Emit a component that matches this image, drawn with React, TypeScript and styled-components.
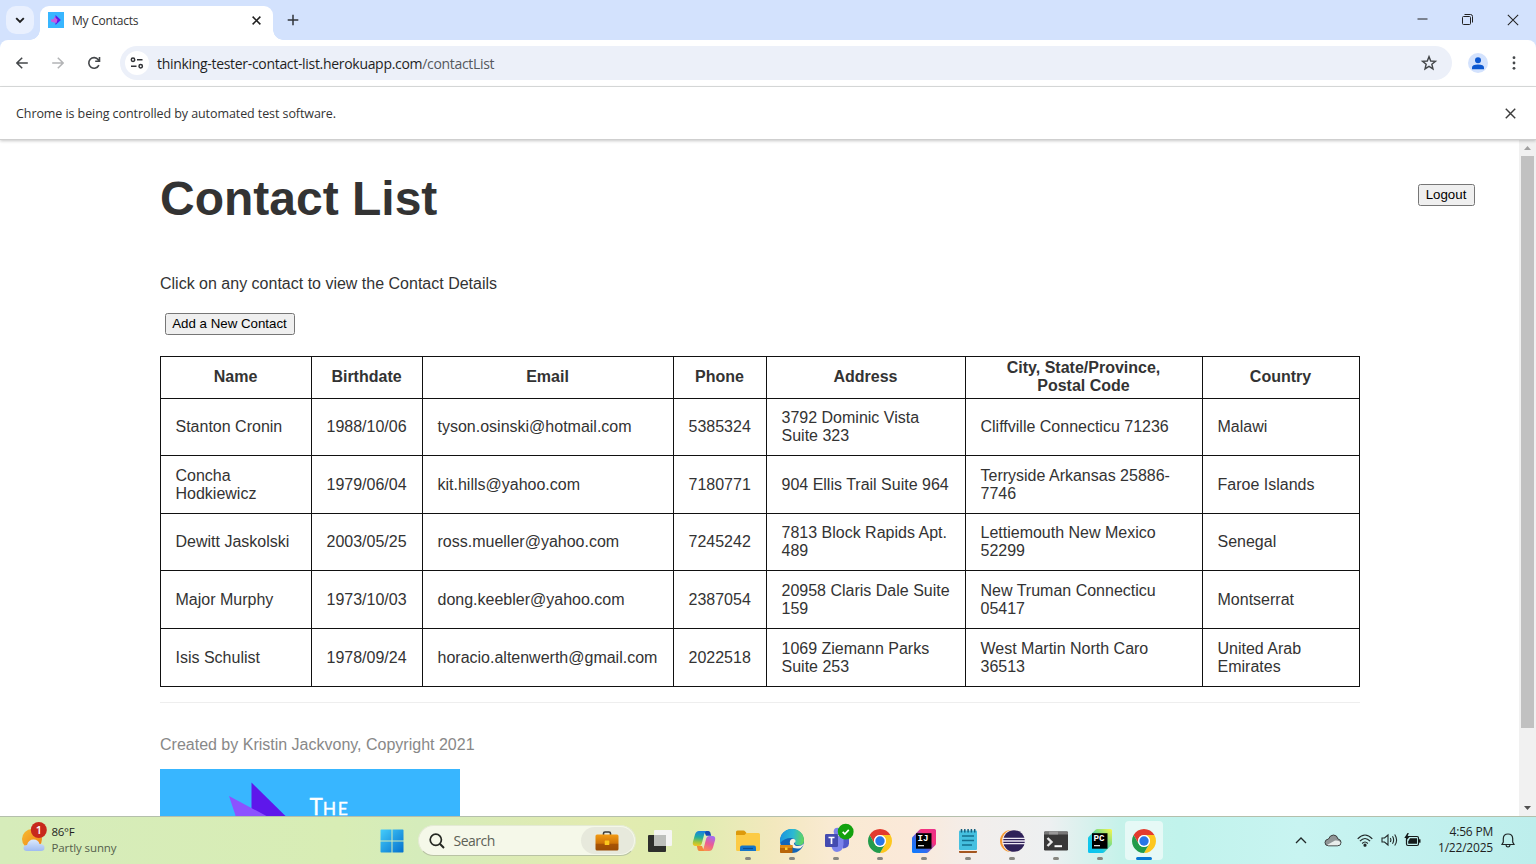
import React from 'react';
import styled, { createGlobalStyle } from 'styled-components';

const Global = createGlobalStyle`
  * { box-sizing: border-box; }
  body { margin: 0; overflow: hidden; background: #fff; }
`;

const ui = `'Open Sans', 'Noto Sans', sans-serif`;
const arial = `'Liberation Sans', Arial, sans-serif`;

const Screen = styled.div`
  width: 1536px;
  height: 864px;
  display: flex;
  flex-direction: column;
  overflow: hidden;
  font-family: ${ui};
`;

const Label = styled.span<{ $size: number; $color?: string; $track?: number }>`
  font-size: ${p => p.$size}px;
  color: ${p => p.$color ?? '#1f1f1f'};
  letter-spacing: ${p => p.$track ?? 0}px;
  white-space: nowrap;
`;

/* ---------- browser chrome ---------- */

const TabStrip = styled.header`
  flex: none;
  height: 40px;
  display: flex;
  background: #d3e2fd;
`;

const TabSearch = styled.div`
  width: 28px;
  height: 28px;
  margin: 6px 0 0 6px;
  border-radius: 10px;
  background: #e9f0fe;
  display: grid;
  place-items: center;
`;

const Tab = styled.div`
  position: relative;
  width: 233px;
  height: 34px;
  margin: 6px 0 0 6px;
  padding: 0 12px 6px 8px;
  display: flex;
  align-items: center;
  background: #fff;
  border-radius: 9px 9px 0 0;
  &::before, &::after {
    content: '';
    position: absolute;
    bottom: 0;
    width: 10px;
    height: 10px;
  }
  &::before { left: -10px; background: radial-gradient(circle at 0 0, transparent 9.5px, #fff 10px); }
  &::after { right: -10px; background: radial-gradient(circle at 100% 0, transparent 9.5px, #fff 10px); }
`;

const TabTitle = styled.div`
  flex: 1;
  padding-left: 8px;
  line-height: 16px;
`;

const NewTab = styled.div`
  width: 40px;
  height: 40px;
  display: grid;
  place-items: center;
`;

const WindowButtons = styled.div`
  margin-left: auto;
  display: flex;
  height: 39px;
`;

const WindowButton = styled.div`
  width: 45.5px;
  display: grid;
  place-items: center;
`;

const ToolbarBack = styled.div`
  flex: none;
  background: #d3e2fd;
`;

const Toolbar = styled.nav`
  height: 47px;
  border-bottom: 1px solid #dcdede;
  border-radius: 8px 8px 0 0;
  background: #fff;
  display: flex;
  align-items: center;
  padding-left: 4px;
`;

const NavButton = styled.div`
  width: 36px;
  height: 46px;
  display: grid;
  place-items: center;
`;

const Omnibox = styled.div`
  flex: none;
  width: 1332px;
  height: 34px;
  margin-left: 8px;
  padding: 0 14px 0 5px;
  border-radius: 17px;
  background: #ecf0f9;
  display: flex;
  align-items: center;
`;

const SiteInfo = styled.div`
  width: 24px;
  height: 24px;
  border-radius: 50%;
  background: #fff;
  display: grid;
  place-items: center;
`;

const Url = styled.div`
  flex: 1;
  padding-left: 8px;
  line-height: 20px;
`;

const Avatar = styled.div`
  flex: none;
  width: 20px;
  height: 20px;
  margin-left: 16px;
  border-radius: 50%;
  background: #d3e2fd;
  display: grid;
  place-items: center;
`;

const MoreButton = styled.div`
  width: 48px;
  padding-left: 4px;
  display: grid;
  place-items: center;
`;

const InfoBar = styled.div`
  position: relative;
  z-index: 1;
  flex: none;
  height: 53px;
  padding: 0 20.5px 0 16px;
  display: flex;
  align-items: center;
  justify-content: space-between;
  background: #fff;
  border-bottom: 1px solid #cfcfcf;
  box-shadow: 0 1px 3px rgba(0, 0, 0, 0.22);
`;

/* ---------- web page ---------- */

const Viewport = styled.div`
  flex: 1;
  min-height: 0;
  display: flex;
`;

const Page = styled.main`
  flex: 1;
  padding: 0 44.5px 0 160px;
  overflow: hidden;
  font-family: ${arial};
  font-size: 16px;
  color: #333;
`;

const PageHeader = styled.div`
  display: flex;
  justify-content: space-between;
  align-items: flex-start;
  height: 134px;
`;

const Title = styled.h1`
  margin: 31px 0 0;
  font-size: 48px;
  line-height: 55px;
  font-weight: 700;
`;

const PlainButton = styled.button`
  height: 22px;
  padding: 0 6px 1px;
  border: 1px solid #767676;
  border-radius: 2.5px;
  background: #efefef;
  color: #000;
  font: 13.3px/18px ${arial};
  white-space: nowrap;
`;

const Logout = styled(PlainButton)`
  width: 57px;
  margin-top: 44px;
`;

const AddContact = styled(PlainButton)`
  display: block;
  width: 130px;
  padding: 0 5px;
  margin: 20px 0 21px 4.5px;
`;

const Hint = styled.p`
  margin: 0;
  line-height: 19px;
`;

const ContactTable = styled.table`
  width: 1200px;
  table-layout: fixed;
  border-collapse: collapse;
  line-height: 18px;
`;

const Col = styled.col<{ $w: number }>`
  width: ${p => p.$w}px;
`;

const Row = styled.tr<{ $h: number }>`
  height: ${p => p.$h}px;
`;

const HeadCell = styled.th`
  border: 1px solid #111;
  padding: 0 1px 1px 0;
  white-space: nowrap;
`;

const Cell = styled.td<{ $drop: boolean }>`
  border: 1px solid #111;
  padding: 0 0 ${p => (p.$drop ? 0 : 1)}px 14.5px;
  white-space: nowrap;
`;

const Divider = styled.hr`
  width: 1200px;
  margin: 15px 0 32px;
  border: 0;
  border-top: 1px solid #eee;
`;

const Credit = styled.p`
  margin: 0 0 15px;
  line-height: 19px;
  color: #888;
`;

const Banner = styled.svg`
  display: block;
`;

const Scrollbar = styled.aside`
  width: 17px;
  padding-left: 2px;
  background: #f1f1f1;
  display: flex;
  flex-direction: column;
  justify-content: space-between;
`;

const Arrow = styled.div`
  height: 16px;
  width: 13px;
  display: grid;
  place-items: center;
`;

const Thumb = styled.div`
  width: 13px;
  height: 572px;
  background: #c1c1c1;
  margin-bottom: auto;
`;

/* ---------- taskbar ---------- */

const Taskbar = styled.footer`
  flex: none;
  height: 48px;
  border-top: 1px solid #b4bfac;
  display: flex;
  align-items: center;
  background: linear-gradient(90deg, #d6ecba 0, #d8edb5 340px, #d5ecbb 420px, #e3ebb0 600px, #deedb0 690px,
    #f3e8be 775px, #f9ead2 830px, #fbe9d9 910px, #f2eeec 980px, #edf0f1 1050px, #c6f2ea 1120px, #c1f3ec 1180px, #c8f4f1 1300px, #bdeeec 1536px);
`;

const Weather = styled.div`
  flex: none;
  width: 379.5px;
  height: 47px;
  padding: 0 0 2px 20px;
  display: flex;
  gap: 3.5px;
`;

const Stack = styled.div<{ $end?: boolean }>`
  display: flex;
  flex-direction: column;
  justify-content: center;
  align-items: ${p => (p.$end ? 'flex-end' : 'flex-start')};
  line-height: 16px;
`;

const Clock = styled(Stack)`
  margin-left: 9px;
  padding-bottom: 2px;
`;

const SearchBox = styled.div`
  flex: none;
  width: 218px;
  height: 31px;
  margin: 0 2.5px 0 14px;
  padding: 0 1px 0 10px;
  border-radius: 16px;
  border: 1px solid #e4ead4;
  border-bottom-color: #b9c3a4;
  background: #f5f8e9;
  display: flex;
  align-items: center;
  gap: 9px;
`;

const SearchChip = styled.div`
  width: 53px;
  height: 27px;
  margin-left: auto;
  border-radius: 14px;
  background: #e7e9dc;
  display: grid;
  place-items: center;
`;

const AppSlot = styled.div<{ $active?: boolean }>`
  position: relative;
  flex: none;
  width: 38px;
  height: 39px;
  margin: 0 3px;
  border-radius: 4px;
  background: ${p => (p.$active ? '#e6f9f6' : 'transparent')};
  display: grid;
  place-items: center;
`;

const Indicator = styled.i<{ $active?: boolean }>`
  position: absolute;
  left: 50%;
  bottom: 0;
  width: ${p => (p.$active ? 16 : 6)}px;
  height: 3px;
  transform: translateX(-50%);
  border-radius: 2px;
  background: ${p => (p.$active ? '#0878d4' : '#888780')};
`;

const Tray = styled.div`
  margin-left: auto;
  padding-right: 13px;
  display: flex;
  align-items: center;
`;

const TrayIcon = styled.div<{ $w: number }>`
  width: ${p => p.$w}px;
  padding-bottom: 1px;
  display: grid;
  place-items: center;
`;

/* ---------- icons ---------- */

const Cross = ({ size, color, w }: { size: number; color: string; w: number }) => (
  <svg width={size} height={size} viewBox="0 0 10 10" fill="none" stroke={color} strokeWidth={w}>
    <path d="M.7.7l8.6 8.6M9.3.7L.7 9.3" />
  </svg>
);

const Chrome = () => (
  <svg width="24" height="24" viewBox="0 0 24 24">
    <path d="M1.610 6A12 12 0 0 1 22.390 6H12A6 6 0 0 0 6.800 15Z" fill="#e33b2e" />
    <path d="M22.390 6A12 12 0 0 1 12 24L17.200 15A6 6 0 0 0 12 6Z" fill="#fdc71e" />
    <path d="M12 24A12 12 0 0 1 1.610 6L6.800 15A6 6 0 0 0 17.200 15Z" fill="#229b4b" />
    <circle cx="12" cy="12" r="6" fill="#fff" />
    <circle cx="12" cy="12" r="4.700" fill="#2876e8" />
  </svg>
);

const Briefcase = () => (
  <svg width="24" height="20" viewBox="0 0 24 20">
    <defs>
      <linearGradient id="bag" x1="0" y1="0" x2="0" y2="1">
        <stop offset="0" stopColor="#f39b13" />
        <stop offset=".55" stopColor="#cf7408" />
        <stop offset=".6" stopColor="#a85405" />
        <stop offset="1" stopColor="#9b4c05" />
      </linearGradient>
    </defs>
    <path d="M8.500 4V2.600Q8.500 1 10 1h4Q15.500 1 15.500 2.600V4" fill="none" stroke="#3a3a38" strokeWidth="1.600" />
    <rect x=".5" y="3.500" width="23" height="16" rx="1.500" fill="url(#bag)" />
    <rect x="9.700" y="9.500" width="4.600" height="4.600" rx=".6" fill="#fcc81d" />
  </svg>
);

const WindowsLogo = () => (
  <svg width="24" height="24" viewBox="0 0 24 24">
    <defs>
      <linearGradient id="win" x1="0" y1="0" x2="1" y2="1">
        <stop offset="0" stopColor="#45cdfb" />
        <stop offset="1" stopColor="#0470cd" />
      </linearGradient>
    </defs>
    <path d="M.5 1.200Q.5.5 1.200.5H11.500V11.500H.5ZM12.500.5H22.800Q23.500.5 23.500 1.200V11.500H12.500ZM.5 12.500H11.500V23.500H1.200Q.5 23.500.5 22.800ZM12.500 12.500H23.500V22.800Q23.500 23.500 22.800 23.500H12.500Z" fill="url(#win)" />
  </svg>
);

const TaskView = () => (
  <svg width="24" height="24" viewBox="0 0 24 24">
    <rect x="0" y="6" width="18" height="17" rx="1" fill="#2e2f2c" />
    <rect x="6" y="1" width="18" height="16" rx="1" fill="#f5f5f3" />
    <rect x="6" y="6" width="12" height="11" fill="#bdbfbb" />
  </svg>
);

const Copilot = () => (
  <svg width="24" height="24" viewBox="0 0 24 24">
    <defs>
      <linearGradient id="cpA" x1="0.400" y1="0" x2="0.300" y2="1">
        <stop offset="0" stopColor="#1b7fe0" />
        <stop offset=".4" stopColor="#1fae9e" />
        <stop offset=".75" stopColor="#a5c63a" />
        <stop offset="1" stopColor="#f4c51f" />
      </linearGradient>
      <linearGradient id="cpB" x1="0.700" y1="0" x2="0.300" y2="1">
        <stop offset="0" stopColor="#a46cf0" />
        <stop offset=".5" stopColor="#ea5c96" />
        <stop offset="1" stopColor="#fb9052" />
      </linearGradient>
    </defs>
    <path d="M12 2H16.500Q17.800 2 18.300 3.500L19.200 6.800H14Z" fill="#1448b5" />
    <path d="M7 2H14.500Q12.800 3 12.200 5.200L9.800 14.500Q9.200 17 7 17H3.500Q.2 17 .9 13L3 5.500Q4 2 7 2Z" fill="url(#cpA)" />
    <path d="M17 22H9.500Q11.200 21 11.800 18.800L14.200 9.500Q14.800 7 17 7H20.500Q23.800 7 23.100 11L21 18.500Q20 22 17 22Z" fill="url(#cpB)" />
    <path d="M12 22H7.500Q6.200 22 5.700 20.500L4.800 17H10Z" fill="#f38a3a" />
  </svg>
);

const Explorer = () => (
  <svg width="24" height="24" viewBox="0 0 24 24">
    <path d="M0 3Q0 1.500 1.500 1.500H7.500Q8.500 1.500 9.200 2.400L10.500 4V8H0Z" fill="#dd9a0c" />
    <path d="M0 6H8.500L10.500 4H22.500Q24 4 24 5.500V20.500Q24 22 22.500 22H1.500Q0 22 0 20.500Z" fill="#fccb45" />
    <path d="M4 22V18.500Q4 16.500 6 16.500H18Q20 16.500 20 18.500V22Z" fill="#1576c9" />
    <path d="M7 19.500H17" stroke="#0c4d92" strokeWidth="1.200" />
  </svg>
);

const Edge = () => (
  <svg width="24" height="24" viewBox="0 0 24 24">
    <defs>
      <linearGradient id="edA" x1="0" y1=".3" x2="1" y2=".4">
        <stop offset="0" stopColor="#1b93df" />
        <stop offset=".55" stopColor="#2cb9d2" />
        <stop offset="1" stopColor="#62d65c" />
      </linearGradient>
    </defs>
    <circle cx="12" cy="12" r="12" fill="#1265b8" />
    <path d="M0 12A12 12 0 0 1 24 11.500Q24 16 19 16.300Q15 16.300 14.800 14Q16.500 10 12 9Q5 8.500 0 14Z" fill="url(#edA)" />
    <path d="M24 14.500Q21 17.500 17 17Q14 16.500 14 14Q16.300 13 15.300 11Q13.500 9 11 10.500Q8.500 13 11 17Q14 20.500 20.500 19.200Q23 17.500 24 14.500Z" fill="#faf0e0" />
    <rect x="0" y="16" width="12.500" height="8" rx=".8" fill="#b86507" />
    <rect x="0" y="16" width="12.500" height="3" rx=".8" fill="#e08a12" />
    <rect x="5" y="18.500" width="2.500" height="2.500" fill="#fccb30" />
  </svg>
);

const TeamsSvg = styled.svg`
  overflow: visible;
`;

const Teams = () => (
  <TeamsSvg width="30" height="30" viewBox="0 0 30 30">
    <circle cx="16.500" cy="5.500" r="3.800" fill="#7b83eb" />
    <path d="M20 10H28V17.500Q27.500 22 22 22.500Z" fill="#5059c9" />
    <path d="M11 10H22.500V18.500Q22 25.500 16 26Q11 25.500 10.500 20Z" fill="#7b83eb" />
    <rect x="4" y="8" width="13" height="13" rx="1.200" fill="#444bb0" />
    <path d="M7.500 11.500H13.500M10.500 11.500V18" stroke="#fff" strokeWidth="1.700" />
    <circle cx="24.700" cy="5.700" r="7.900" fill="#13a10e" />
    <path d="M21.700 5.900L23.800 8L27.800 3.900" fill="none" stroke="#fff" strokeWidth="1.700" />
  </TeamsSvg>
);

const JetBrains = ({ code, stops }: { code: string; stops: string[] }) => (
  <svg width="24" height="24" viewBox="0 0 24 24">
    <defs>
      <linearGradient id={`jb${code}`} x1="0" y1="1" x2="1" y2="0">
        {stops.map((c, i) => (
          <stop key={c} offset={i / (stops.length - 1)} stopColor={c} />
        ))}
      </linearGradient>
    </defs>
    <path d="M0 9.500Q0 8.500.7 7.800L7.500.8Q8.300 0 9.300 0H22.500Q24 0 24 1.500V14.500Q24 15.500 23.300 16.200L16.300 23.200Q15.500 24 14.500 24H1.500Q0 24 0 22.500Z" fill={`url(#jb${code})`} />
    <rect x="4" y="4.200" width="15.500" height="15.500" fill="#000" />
    <text x="5.600" y="12.400" fontFamily="Liberation Mono, monospace" fontWeight="700" fontSize="9.200" fill="#fff">{code}</text>
    <rect x="6" y="16" width="6" height="1.300" fill="#ddd" />
  </svg>
);

const Notepad = () => (
  <svg width="20" height="24" viewBox="0 0 20 24">
    <rect x="1" y="19" width="18" height="5" rx="1" fill="#a4561f" />
    <rect x="1" y="19.500" width="18" height="2.500" fill="#f3eee8" />
    <rect x="1" y="1.500" width="18" height="19.500" rx="1" fill="#45c0e0" />
    <path d="M3.500 0V3.500M6.800 0V3.500M10.100 0V3.500M13.400 0V3.500M16.700 0V3.500" stroke="#14607f" strokeWidth="1.500" />
    <path d="M4 7H16M4 11.500H16M4 16H14" stroke="#14708f" strokeWidth="1.500" />
  </svg>
);

const Eclipse = () => (
  <svg width="25" height="24" viewBox="0 0 25 24">
    <path d="M11 1A11 11 0 0 0 11 23L14 12Z" fill="#f69a33" />
    <circle cx="13.500" cy="12" r="11.200" fill="#fdf3ee" />
    <circle cx="14" cy="12" r="10.800" fill="#2f2259" />
    <path d="M2.500 9.300H25M2.500 12H25M2.500 14.700H25" stroke="#efeaf5" strokeWidth="1.300" />
  </svg>
);

const Terminal = () => (
  <svg width="24" height="20" viewBox="0 0 24 20">
    <rect width="24" height="19" y=".5" rx="1.200" fill="#383838" />
    <path d="M0 1.700Q0 .5 1.200.5H22.800Q24 .5 24 1.700V3.500H0Z" fill="#777" />
    <path d="M5 .5H14V3.500H5Z" fill="#999" />
    <path d="M3.500 7L7.500 11L3.500 15" fill="none" stroke="#e8e8e8" strokeWidth="2.400" />
    <path d="M10.500 15.200H18" stroke="#fff" strokeWidth="2" />
  </svg>
);

const WeatherIcon = () => (
  <svg width="28" height="34" viewBox="0 0 28 34">
    <defs>
      <linearGradient id="sun" x1="0" y1="0" x2="1" y2="1">
        <stop offset="0" stopColor="#f6bd31" />
        <stop offset="1" stopColor="#f07d14" />
      </linearGradient>
      <linearGradient id="cl" x1="0" y1="0" x2="0" y2="1">
        <stop offset="0" stopColor="#dce9fc" />
        <stop offset="1" stopColor="#9fbbf1" />
      </linearGradient>
    </defs>
    <circle cx="12" cy="22" r="10" fill="url(#sun)" />
    <path d="M7 34Q3.500 34 3.500 31Q3.500 28.200 7 28Q8.500 22.500 13.500 22.500Q18.500 22.500 19.500 27Q24.500 27 24.500 30.700Q24.500 34 21 34Z" fill="url(#cl)" />
    <circle cx="18.800" cy="13" r="8" fill="#c7281c" />
    <text x="18.800" y="17" textAnchor="middle" fontFamily="Open Sans" fontWeight="600" fontSize="11" fill="#fff">1</text>
  </svg>
);

/* ---------- data ---------- */

const columns: [React.ReactNode, number][] = [
  ['Name', 151],
  ['Birthdate', 111],
  ['Email', 251],
  ['Phone', 93],
  ['Address', 199],
  [<>City, State/Province,<br />Postal Code</>, 237],
  ['Country', 157],
];

const rows: { h: number; cells: string[] }[] = [
  { h: 57, cells: ['Stanton Cronin', '1988/10/06', 'tyson.osinski@hotmail.com', '5385324', '3792 Dominic Vista\nSuite 323', 'Cliffville Connecticu 71236', 'Malawi'] },
  { h: 58, cells: ['Concha\nHodkiewicz', '1979/06/04', 'kit.hills@yahoo.com', '7180771', '904 Ellis Trail Suite 964', 'Terryside Arkansas 25886-\n7746', 'Faroe Islands'] },
  { h: 57, cells: ['Dewitt Jaskolski', '2003/05/25', 'ross.mueller@yahoo.com', '7245242', '7813 Block Rapids Apt.\n489', 'Lettiemouth New Mexico\n52299', 'Senegal'] },
  { h: 58, cells: ['Major Murphy', '1973/10/03', 'dong.keebler@yahoo.com', '2387054', '20958 Claris Dale Suite\n159', 'New Truman Connecticu\n05417', 'Montserrat'] },
  { h: 58, cells: ['Isis Schulist', '1978/09/24', 'horacio.altenwerth@gmail.com', '2022518', '1069 Ziemann Parks\nSuite 253', 'West Martin North Caro\n36513', 'United Arab\nEmirates'] },
];

const MultiLine = styled.span`
  white-space: pre;
`;

const apps: { icon: React.ReactNode; running?: boolean; active?: boolean }[] = [
  { icon: <TaskView /> },
  { icon: <Copilot /> },
  { icon: <Explorer />, running: true },
  { icon: <Edge />, running: true },
  { icon: <Teams />, running: true },
  { icon: <Chrome />, running: true },
  { icon: <JetBrains code="IJ" stops={['#0a7cff', '#2f6df0', '#f7317c', '#e8308a']} />, running: true },
  { icon: <Notepad />, running: true },
  { icon: <Eclipse />, running: true },
  { icon: <Terminal />, running: true },
  { icon: <JetBrains code="PC" stops={['#07c3f2', '#14c8e8', '#8be07c', '#fcf84a']} />, running: true },
  { icon: <Chrome />, active: true },
];

export default function App() {
  return (
    <Screen>
      <Global />
      <TabStrip>
        <TabSearch>
          <svg width="10" height="7" viewBox="0 0 10 7" fill="none" stroke="#1f1f1f" strokeWidth="1.900"><path d="M1.200 1.200L5 5L8.800 1.200" /></svg>
        </TabSearch>
        <Tab>
          <svg width="16" height="16" viewBox="0 0 16 16">
            <rect width="16" height="16" fill="#38b6ff" />
            <path d="M7.500 3L12.800 8L7.500 13Z" fill="#5e17eb" />
            <path d="M6 4.500L9.500 7.500L8.500 11L5.800 10.500L3 9.500V7.500L6 7Z" fill="#c65be0" />
          </svg>
          <TabTitle><Label $size={12} $track={-0.22} $color="#333">My Contacts</Label></TabTitle>
          <Cross size={9} color="#1f1f1f" w={1.7} />
        </Tab>
        <NewTab>
          <svg width="12" height="12" viewBox="0 0 12 12" stroke="#30343a" strokeWidth="1.500"><path d="M6 .7V11.300M.7 6H11.300" /></svg>
        </NewTab>
        <WindowButtons>
          <WindowButton><svg width="11" height="11" viewBox="0 0 11 11" stroke="#222" strokeWidth="1"><path d="M.5 5H10.500" /></svg></WindowButton>
          <WindowButton>
            <svg width="11" height="11" viewBox="0 0 11 11" fill="none" stroke="#222" strokeWidth="1">
              <rect x=".5" y="2.500" width="8" height="8" rx="1" /><path d="M2.500.5H8.500Q10.500.5 10.500 2.500V8.500" />
            </svg>
          </WindowButton>
          <WindowButton><Cross size={12} color="#222" w={0.85} /></WindowButton>
        </WindowButtons>
      </TabStrip>
      <ToolbarBack>
        <Toolbar>
          <NavButton>
            <svg width="12" height="12" viewBox="0 0 12 12" fill="none" stroke="#44474a" strokeWidth="1.500"><path d="M11.800 6H1M6.200.7L.9 6L6.200 11.300" /></svg>
          </NavButton>
          <NavButton>
            <svg width="12" height="12" viewBox="0 0 12 12" fill="none" stroke="#b3b4b6" strokeWidth="1.500"><path d="M.2 6H11M5.800.7L11.100 6L5.800 11.300" /></svg>
          </NavButton>
          <NavButton>
            <svg width="14" height="14" viewBox="0 0 14 14" fill="none" stroke="#44474a" strokeWidth="1.600"><path d="M11.900 9.200A5.300 5.300 0 1 1 11.300 3.700L12.300 5M12.500 1V5.300H8.200" /></svg>
          </NavButton>
          <Omnibox>
            <SiteInfo>
              <svg width="14" height="12" viewBox="0 0 14 12" fill="none" stroke="#303236" strokeWidth="1.500">
                <circle cx="3" cy="2.700" r="1.700" /><path d="M7 2.700H12.500M1 9.300H6.500" /><circle cx="10.700" cy="9.300" r="1.700" />
              </svg>
            </SiteInfo>
            <Url>
              <Label $size={14} $track={-0.31}>thinking-tester-contact-list.herokuapp.com</Label>
              <Label $size={14} $track={-0.31} $color="#55585d">/contactList</Label>
            </Url>
            <svg width="18" height="18" viewBox="0 0 24 24" fill="none" stroke="#44474a" strokeWidth="1.900"><path d="M12 3.500L14.300 9.300L20.600 9.700L15.800 13.700L17.300 19.800L12 16.500L6.700 19.800L8.200 13.700L3.400 9.700L9.700 9.300Z" /></svg>
          </Omnibox>
          <Avatar>
            <svg width="12" height="13" viewBox="0 0 12 13" fill="#0b57d0"><circle cx="6" cy="3.300" r="3" /><path d="M0 12.300V10.500Q0 7.700 6 7.500Q12 7.700 12 10.500V12.300Z" /></svg>
          </Avatar>
          <MoreButton>
            <svg width="4" height="16" viewBox="0 0 4 16" fill="#44474a"><circle cx="2" cy="2.700" r="1.400" /><circle cx="2" cy="8" r="1.400" /><circle cx="2" cy="13.300" r="1.400" /></svg>
          </MoreButton>
        </Toolbar>
      </ToolbarBack>
      <InfoBar>
        <Label $size={12.500} $track={-0.08} $color="#333">Chrome is being controlled by automated test software.</Label>
        <Cross size={11} color="#3c3c3c" w={1.3} />
      </InfoBar>

      <Viewport>
        <Page>
          <PageHeader>
            <Title>Contact List</Title>
            <Logout>Logout</Logout>
          </PageHeader>
          <Hint>Click on any contact to view the Contact Details</Hint>
          <AddContact>Add a New Contact</AddContact>
          <ContactTable>
            <colgroup>{columns.map(([, w], i) => <Col key={i} $w={w} />)}</colgroup>
            <thead>
              <Row $h={42}>{columns.map(([name], i) => <HeadCell key={i}>{name}</HeadCell>)}</Row>
            </thead>
            <tbody>
              {rows.map(r => (
                <Row key={r.cells[0]} $h={r.h}>
                  {r.cells.map((c, i) => <Cell key={i} $drop={r.h === 58}><MultiLine>{c}</MultiLine></Cell>)}
                </Row>
              ))}
            </tbody>
          </ContactTable>
          <Divider />
          <Credit>Created by Kristin Jackvony, Copyright 2021</Credit>
          <Banner width="300" height="150" viewBox="0 0 300 150">
            <rect width="300" height="150" fill="#38b6ff" />
            <path d="M91.500 13.500L161 82H91.500Z" fill="#5e17eb" />
            <path d="M69 27L130 59.500L90 90Z" fill="#8c52ff" />
            <text x="149.500" y="45.500" fontFamily="Lato" fontSize="22.500" fill="#fff" stroke="#fff" strokeWidth=".35">T<tspan fontSize="17.500" letterSpacing="1.500">HE</tspan></text>
          </Banner>
        </Page>
        <Scrollbar>
          <Arrow><svg width="7" height="4"><path d="M0 4L3.500 0L7 4Z" fill="#a0a0a0" /></svg></Arrow>
          <Thumb />
          <Arrow><svg width="7" height="4"><path d="M0 0L3.500 4L7 0Z" fill="#505050" /></svg></Arrow>
        </Scrollbar>
      </Viewport>

      <Taskbar>
        <Weather>
          <WeatherIcon />
          <Stack>
            <Label $size={11.500} $track={-0.3}>86°F</Label>
            <Label $size={11.500} $track={-0.1} $color="#55614c">Partly sunny</Label>
          </Stack>
        </Weather>
        <WindowsLogo />
        <SearchBox>
          <svg width="16" height="16" viewBox="0 0 16 16" fill="none" stroke="#252822" strokeWidth="1.700"><circle cx="6.800" cy="6.800" r="5.600" /><path d="M10.800 10.800L15 15" strokeWidth="2" /></svg>
          <Label $size={14} $color="#5d6156" $track={-0.5}>Search</Label>
          <SearchChip><Briefcase /></SearchChip>
        </SearchBox>
        {apps.map((a, i) => (
          <AppSlot key={i} $active={a.active}>
            {a.icon}
            {(a.running || a.active) && <Indicator $active={a.active} />}
          </AppSlot>
        ))}
        <Tray>
          <TrayIcon $w={32}><svg width="12" height="7" viewBox="0 0 12 7" fill="none" stroke="#202828" strokeWidth="1.300"><path d="M1 6L6 1L11 6" /></svg></TrayIcon>
          <TrayIcon $w={32}>
            <svg width="18" height="13" viewBox="0 0 18 13">
              <path d="M4.500 11.800Q1 11.800 1 8.500Q1 5.500 4.500 5Q6 1 9.500 1Q13 1 14 5Q17 5.500 17 8.500Q17 11.800 13.500 11.800Z" fill="#909596" stroke="#3c4040" strokeWidth="1" />
              <path d="M3 11L11 6.500Q16 6 16.500 9Q16 11.300 13.500 11.300H4.500Z" fill="#e9edec" />
            </svg>
          </TrayIcon>
          <TrayIcon $w={32}>
            <svg width="16" height="13" viewBox="0 0 16 13" fill="none" stroke="#202828" strokeWidth="1.200">
              <path d="M.7 4.800Q8-2.800 15.300 4.800M2.900 7.200Q8 1.800 13.100 7.200M5.200 9.500Q8 6.500 10.800 9.500" /><circle cx="8" cy="11.200" r="1" fill="#202828" />
            </svg>
          </TrayIcon>
          <TrayIcon $w={16}>
            <svg width="17" height="14" viewBox="0 0 17 14" fill="none" stroke="#202828" strokeWidth="1.100">
              <path d="M1 5V9H3.500L7 12V2L3.500 5ZM9.300 5Q10.500 7 9.300 9M11.500 3.300Q13.800 7 11.500 10.700M13.700 1.500Q17.500 7 13.700 12.500" />
            </svg>
          </TrayIcon>
          <TrayIcon $w={32}>
            <svg width="17" height="14" viewBox="0 0 17 14">
              <rect x="2.500" y="3.500" width="12" height="9" rx="1.500" fill="none" stroke="#151b1b" strokeWidth="1.200" />
              <path d="M6 5.300H13V10.800H4.200V8.500Z" fill="#151b1b" /><rect x="15" y="6.300" width="1.500" height="3.400" fill="#151b1b" />
              <path d="M3.500 0L.3 5H2.500L1.800 8L5.800 3.500H3.500L4.800 0Z" fill="#151b1b" />
            </svg>
          </TrayIcon>
          <Clock $end>
            <Label $size={12} $track={-0.2}>4:56 PM</Label>
            <Label $size={12} $track={-0.2}>1/22/2025</Label>
          </Clock>
          <TrayIcon $w={30}>
            <svg width="14" height="15" viewBox="0 0 14 15" fill="none" stroke="#202828" strokeWidth="1.200"><path d="M1 11.500H13L11.700 9V5.500Q11.500 1 7 1Q2.500 1 2.300 5.500V9ZM5 12Q5.200 14 7 14Q8.800 14 9 12" /></svg>
          </TrayIcon>
        </Tray>
      </Taskbar>
    </Screen>
  );
}
